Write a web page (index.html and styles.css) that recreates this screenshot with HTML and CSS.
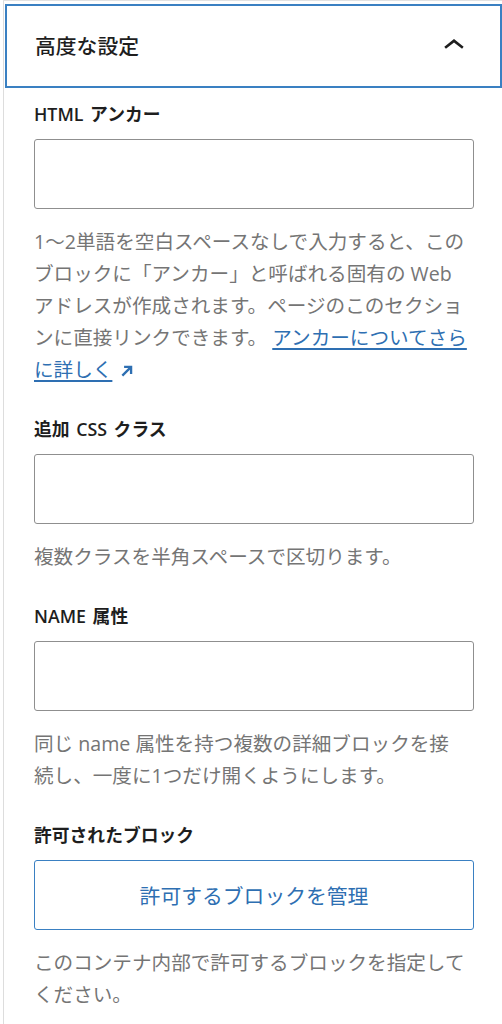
FILE: index.html
```html
<!DOCTYPE html>
<html lang="ja">
<head>
<meta charset="utf-8">
<title>高度な設定</title>
<link rel="stylesheet" href="styles.css">
</head>
<body>
<div class="panel">
  <div class="panel-header">
    <h2 class="panel-title">高度な設定</h2>
    <svg class="chevron" viewBox="0 0 24 24" aria-hidden="true"><path d="M6.5 12.4L12 8l5.5 4.4-.9 1.2L12 10l-4.6 3.6-1-1.2z"/></svg>
  </div>
  <div class="panel-body">
    <div class="field">
      <label class="field-label">HTML アンカー</label>
      <input class="text-input" type="text">
      <p class="help">1〜2単語を空白スペースなしで入力すると、このブロックに「アンカー」と呼ばれる固有の Web アドレスが作成されます。ページのこのセクションに直接リンクできます。 <a class="link" href="#">アンカーについてさらに詳しく</a><svg class="ext" viewBox="0 0 12 12" aria-hidden="true"><path d="M2 10L9.5 2.5M3.5 2.5h6V8.5"/></svg></p>
    </div>
    <div class="field">
      <label class="field-label">追加 CSS クラス</label>
      <input class="text-input" type="text">
      <p class="help">複数クラスを半角スペースで区切ります。</p>
    </div>
    <div class="field">
      <label class="field-label">NAME 属性</label>
      <input class="text-input" type="text">
      <p class="help">同じ name 属性を持つ複数の詳細ブロックを接<br>続し、一度に1つだけ開くようにします。</p>
    </div>
    <div class="field">
      <label class="field-label">許可されたブロック</label>
      <button class="manage-btn" type="button">許可するブロックを管理</button>
      <p class="help">このコンテナ内部で許可するブロックを指定してください。</p>
    </div>
  </div>
</div>
</body>
</html>
```
FILE: styles.css
```css
html, body {
  margin: 0;
  padding: 0;
  background: #ffffff;
}
body {
  font-family: "Open Sans", "Noto Sans CJK JP", sans-serif;
  color: #1e1e1e;
}
.panel {
  margin-left: 3px;
  border-left: 1px solid #dddddd;
  border-top: 1px solid #e2e2e2;
  padding-top: 3px;
  min-height: 1020px;
}
.panel-header {
  margin-left: 1px;
  height: 84px;
  box-shadow: inset 0 0 0 2px #3a80c2;
  display: flex;
  align-items: center;
  justify-content: space-between;
  padding: 0 27px 0 30px;
}
.panel-title {
  margin: 0;
  font-size: 20.8px;
  font-weight: 500;
  line-height: 28px;
  color: #1e1e1e;
}
.chevron {
  width: 42px;
  height: 42px;
  fill: #1e1e1e;
}
.panel-body {
  padding: 14px 28px 0 30px;
  display: flex;
  flex-direction: column;
  gap: 31px;
}
.field {
  display: flex;
  flex-direction: column;
}
.field-label {
  font-size: 17.8px;
  font-weight: 600;
  line-height: 24px;
  margin-bottom: 13px;
  word-spacing: 2px;
  color: #1e1e1e;
}
.text-input {
  box-sizing: border-box;
  width: 100%;
  height: 70px;
  margin: 0;
  border: 1.5px solid #8f8f8f;
  border-radius: 3px;
  background: #fff;
  font: inherit;
}
.help {
  margin: 17px 0 0;
  font-size: 19.6px;
  line-height: 32px;
  color: #757575;
}
.link {
  color: #2e6fb2;
  text-decoration: underline;
  text-underline-offset: 3px;
  text-decoration-thickness: 1.5px;
}
.ext {
  display: inline-block;
  width: 14px;
  height: 14px;
  margin-left: 8px;
  vertical-align: -1px;
  fill: none;
  stroke: #2e6fb2;
  stroke-width: 2;
}
.manage-btn {
  box-sizing: border-box;
  width: 100%;
  height: 70px;
  margin: 0;
  border: 1.5px solid #3a80c2;
  border-radius: 3px;
  background: #fff;
  color: #2e6fb2;
  font-family: inherit;
  font-size: 20.8px;
  font-weight: 400;
  cursor: pointer;
}
```
